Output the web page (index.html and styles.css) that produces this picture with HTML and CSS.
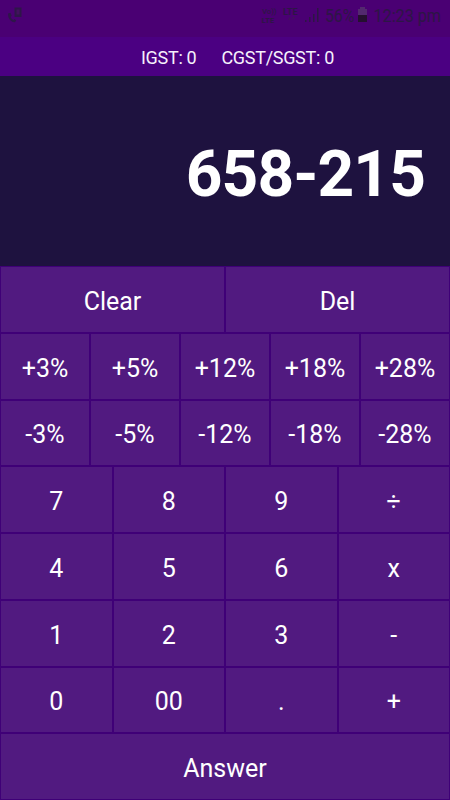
FILE: index.html
```html
<!DOCTYPE html>
<html lang="en">
  <head>
    <meta charset="UTF-8" />
    <meta name="viewport" content="width=device-width, initial-scale=1.0" />
    <title>GST Calculator</title>
    <link rel="stylesheet" href="styles.css">
  </head>
  <body>
    <div class="calculator">
      <!-- phone status bar -->
      <div class="status-bar">
        <!-- call icon -->
        <svg class="status-icon" width="16" height="16" viewBox="0 0 16 16">
          <path d="M7.5 0.5h7v9.500h-7z" />
          <path class="call-mark" d="M9.500 2.500h3v5h-3z" />
          <path d="M1 6.500l2.500-0.800 1.200 3-1.200 1.200q1 2 2.800 3l1.400-0.800 1.500 1.500-1.200 1.700q-2.500 0.400-5-2.400-2.400-3-2-6.400z" />
        </svg>
        <!-- network, battery and time -->
        <svg class="status-info" width="190" height="30" viewBox="0 0 190 30">
          <text transform="translate(2 13.500) scale(1.100 1)" font-size="7" font-weight="500">Vo))</text>
          <text transform="translate(1.500 22.500) scale(1.050 1)" font-size="7.500" font-weight="700">LTE</text>
          <text transform="translate(23 15) scale(1)" font-size="9" font-weight="700">LTE</text>
          <path class="dim" d="M28 20l1.500-3 1.500 3zM32 17h3l-1.500 3z" />
          <path d="M45 20h1.500v2h-1.500zM49 17h1.500v5h-1.500zM53 14h1.500v8h-1.500zM57 8h1.500v14h-1.500z" />
          <text transform="translate(65 22) scale(0.830 1)" font-size="19">56%</text>
          <path class="battery-empty" d="M100 7h5v2h2v6h-9v-6h2z" />
          <path class="battery-full" d="M98 15h9v7h-9z" />
          <text transform="translate(113.500 22) scale(0.850 1)" font-size="19">12:23 pm</text>
        </svg>
      </div>
      <!-- tax values -->
      <div class="tax-bar">
        <span>IGST: 0</span>
        <span>CGST/SGST: 0</span>
      </div>
      <!-- the display -->
      <div class="display">658-215</div>
      <!-- the keys -->
      <div class="keys">
        <div class="row">
          <button>Clear</button>
          <button>Del</button>
        </div>
        <div class="row">
          <button>+3%</button>
          <button>+5%</button>
          <button>+12%</button>
          <button>+18%</button>
          <button>+28%</button>
        </div>
        <div class="row">
          <button>-3%</button>
          <button>-5%</button>
          <button>-12%</button>
          <button>-18%</button>
          <button>-28%</button>
        </div>
        <div class="row">
          <button>7</button>
          <button>8</button>
          <button>9</button>
          <button>÷</button>
        </div>
        <div class="row">
          <button>4</button>
          <button>5</button>
          <button>6</button>
          <button>x</button>
        </div>
        <div class="row">
          <button>1</button>
          <button>2</button>
          <button>3</button>
          <button>-</button>
        </div>
        <div class="row">
          <button>0</button>
          <button>00</button>
          <button>.</button>
          <button>+</button>
        </div>
        <div class="row">
          <button>Answer</button>
        </div>
      </div>
    </div>
  </body>
</html>
```
FILE: styles.css
```css
/* removing default styling */
* {
  margin: 0;
  padding: 0;
  box-sizing: border-box;
  font-family: Roboto, sans-serif;
}
.calculator {
  display: flex;
  flex-direction: column;
  height: 100vh;
  min-height: 800px;
  background-color: #4b0082;
}
/* status bar */
.status-bar {
  display: flex;
  justify-content: space-between;
  height: 37px;
  padding-left: 7px;
  background-color: #4a0073;
}
.status-icon {
  margin-top: 7px;
  fill: #2e1649;
}
.status-info {
  fill: #2d1645;
}
.call-mark {
  fill: #43105f;
}
.dim {
  fill: #42105f;
}
.battery-empty {
  fill: #53296f;
}
.battery-full {
  fill: #25102f;
}
/* tax values on top of the display */
.tax-bar {
  display: flex;
  justify-content: center;
  align-items: center;
  gap: 25px;
  height: 39px;
  padding: 2px 0 0 25px;
  font-size: 18px;
  letter-spacing: -0.3px;
  color: #f6f1fc;
}
/* the current calculation */
.display {
  display: flex;
  justify-content: flex-end;
  align-items: center;
  height: 190px;
  padding: 7px 25px 0 0;
  background-color: #1e123f;
  color: #fff;
  font-size: 64px;
  font-weight: 700;
  letter-spacing: -0.9px;
}
/* the keys */
.keys {
  display: flex;
  flex-direction: column;
  flex: 1;
}
.row {
  display: flex;
  flex: 1;
}
.row button {
  flex: 1;
  min-width: 0;
  padding-top: 4px;
  border: 1px solid #3f0077;
  background-color: #511a80;
  color: #fff;
  font-size: 25px;
}
```
